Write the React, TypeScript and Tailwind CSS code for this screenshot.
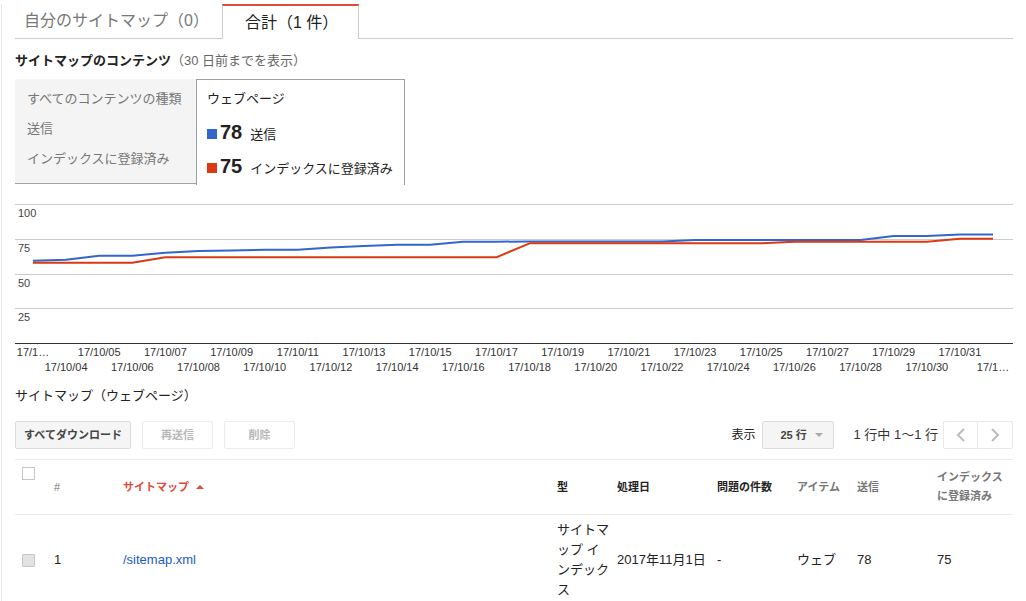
import React from 'react'

const blueY = [
  260.7, 259.7, 255.7, 255.7, 252.7, 251, 250.5, 249.7, 249.7, 247.5, 246, 244.7, 244.7, 241.7, 241.7,
  241.5, 241.5, 241.5, 241.5, 241.5, 240, 240, 240, 240, 240, 240, 236, 236, 234.5, 234.5,
]

const redY = [
  262.7, 262.7, 262.7, 262.7, 257.3, 257.3, 257.3, 257.3, 257.3, 257.3, 257.3, 257.3, 257.3, 257.3, 257.3,
  243.3, 243.3, 243.3, 243.3, 243.3, 243.3, 243.3, 243.3, 241.7, 241.7, 241.7, 241.7, 241.7, 238.7, 238.7,
]

const xAt = (i: number) => 33 + (i * 960) / 29

const toPoints = (ys: number[]) => ys.map((y, i) => `${xAt(i).toFixed(1)},${y}`).join(' ')

const dateLabel = (i: number) => {
  if (i === 0 || i === 29) return '17/1…'
  const d = 3 + i
  return `17/10/${d < 10 ? '0' + d : d}`
}

function Chart() {
  const grid = [204.5, 239.5, 274.5, 308.5]
  const yLabels = ['100', '75', '50', '25']
  return (
    <svg width={998} height={191} viewBox="15 185 998 191" className="block">
      {grid.map((y) => (
        <line key={y} x1={15} x2={1013} y1={y} y2={y} stroke="#cccccc" strokeWidth={1} />
      ))}
      <line x1={15} x2={1013} y1={343.5} y2={343.5} stroke="#333333" strokeWidth={1} />
      {yLabels.map((t, k) => (
        <text key={t} x={18} y={grid[k] + 12} fontSize={11} fill="#444444" fontFamily="Liberation Sans, Arial, sans-serif">
          {t}
        </text>
      ))}
      <polyline points={toPoints(blueY)} fill="none" stroke="#3366cc" strokeWidth={2} strokeLinejoin="round" />
      <polyline points={toPoints(redY)} fill="none" stroke="#dc3912" strokeWidth={2} strokeLinejoin="round" />
      {Array.from({ length: 30 }).map((_, i) => (
        <text
          key={i}
          x={xAt(i)}
          y={i % 2 === 0 ? 356 : 371}
          fontSize={11}
          fill="#333333"
          textAnchor="middle"
          fontFamily="Liberation Sans, Arial, sans-serif"
        >
          {dateLabel(i)}
        </text>
      ))}
    </svg>
  )
}

function Chevron({ dir }: { dir: 'left' | 'right' }) {
  return (
    <svg width="10" height="14" viewBox="0 0 10 14">
      <polyline
        points={dir === 'left' ? '8,1 2,7 8,13' : '2,1 8,7 2,13'}
        fill="none"
        stroke="#bdbdbd"
        strokeWidth={2}
      />
    </svg>
  )
}

export default function App() {
  return (
    <div className="ml-[1px] min-h-[601px] w-[1025px] border-l border-[#e6e6e6] bg-white pl-[13px] font-['Liberation_Sans','Noto_Sans_CJK_JP',sans-serif] text-[#222]">
      {/* Tabs */}
      <div className="mt-[4px] flex h-[35px] w-[998px] border-b border-[#cccccc]">
        <div className="flex w-[207px] items-center pl-[9px] text-[16px] leading-[20px] text-[#777]">
          自分のサイトマップ（0）
        </div>
        <div className="-mb-px flex h-[35px] w-[137px] items-center border-x border-t-2 border-x-[#cccccc] border-t-[#dd4b39] bg-white pl-[22px] text-[16px] leading-[20px] text-[#222]">
          合計（1 件）
        </div>
      </div>

      {/* Contents header */}
      <div className="mt-[12px] text-[13px] leading-[20px]">
        <span className="font-bold">サイトマップのコンテンツ</span>
        <span className="text-[#666]">（30 日前までを表示）</span>
      </div>

      {/* Content type selector */}
      <div className="mt-[8px] flex items-start">
        <div className="flex h-[105px] w-[181px] flex-col border-b border-[#a0a0a0] bg-[#f4f4f4] pl-[12px] text-[13px] leading-[20px] text-[#777]">
          <div className="mt-[10px]">すべてのコンテンツの種類</div>
          <div className="mt-[10px]">送信</div>
          <div className="mt-[10px]">インデックスに登録済み</div>
        </div>
        <div className="flex h-[106px] w-[209px] flex-col border-x border-t border-[#a0a0a0] bg-white pl-[10px]">
          <div className="mt-[9px] text-[13px] leading-[20px]">ウェブページ</div>
          <div className="mt-[10px] flex h-[26px] items-baseline">
            <span className="inline-block h-[10px] w-[10px] bg-[#3366cc]" />
            <span className="ml-[3px] text-[20px] font-bold leading-[26px]">78</span>
            <span className="ml-[8px] text-[13px] leading-[26px]">送信</span>
          </div>
          <div className="mt-[8px] flex h-[26px] items-baseline">
            <span className="inline-block h-[10px] w-[10px] bg-[#dc3912]" />
            <span className="ml-[3px] text-[20px] font-bold leading-[26px]">75</span>
            <span className="ml-[8px] text-[13px] leading-[26px]">インデックスに登録済み</span>
          </div>
        </div>
      </div>

      <Chart />

      {/* Sitemap list */}
      <div className="mt-[10px] text-[13px] leading-[20px]">サイトマップ（ウェブページ）</div>

      <div className="mt-[15px] flex h-[28px] w-[998px] items-center">
        <button className="h-[28px] w-[116px] rounded-[2px] border border-[#dcdcdc] bg-[#f5f5f5] text-[11px] font-bold text-[#444]">
          すべてダウンロード
        </button>
        <button className="ml-[11px] h-[28px] w-[71px] rounded-[2px] border border-[#ececec] bg-white text-[11px] font-bold text-[#b8b8b8]">
          再送信
        </button>
        <button className="ml-[11px] h-[28px] w-[71px] rounded-[2px] border border-[#ececec] bg-white text-[11px] font-bold text-[#b8b8b8]">
          削除
        </button>

        <div className="ml-auto flex items-center">
          <span className="text-[12px] leading-[20px]">表示</span>
          <div className="ml-[7px] flex h-[28px] w-[72px] items-center rounded-[2px] border border-[#dcdcdc] bg-[#f5f5f5] pl-[17px] text-[11px] font-bold text-[#444]">
            25 行
            <span className="ml-[8px] inline-block h-0 w-0 border-x-[4px] border-t-[4px] border-x-transparent border-t-[#aaaaaa]" />
          </div>
          <span className="ml-[19px] text-[13px] leading-[20px] text-[#333]">1 行中 1～1 行</span>
          <div className="ml-[5px] flex">
            <div className="flex h-[28px] w-[35px] items-center justify-center rounded-l-[2px] border border-[#e8e8e8] bg-white">
              <Chevron dir="left" />
            </div>
            <div className="-ml-px flex h-[28px] w-[36px] items-center justify-center rounded-r-[2px] border border-[#e8e8e8] bg-white">
              <Chevron dir="right" />
            </div>
          </div>
        </div>
      </div>

      {/* Table header */}
      <div className="mt-[10px] grid h-[56px] w-[998px] grid-cols-[39px_69px_434px_60px_100px_80px_60px_80px_76px] items-center border-y border-[#ebebeb] text-[11px] font-bold leading-[19px]">
        <div className="self-start pl-[7px] pt-[7px]">
          <div className="h-[13px] w-[13px] border border-[#c6c6c6] bg-white" />
        </div>
        <div className="font-normal text-[#777]">#</div>
        <div className="flex items-center text-[#dd4b39]">
          サイトマップ
          <span className="ml-[7px] inline-block h-0 w-0 border-x-[4px] border-b-[4px] border-x-transparent border-b-[#dd4b39]" />
        </div>
        <div>型</div>
        <div>処理日</div>
        <div>問題の件数</div>
        <div className="text-[#777]">アイテム</div>
        <div className="text-[#777]">送信</div>
        <div className="text-[#777]">
          インデックス
          <br />
          に登録済み
        </div>
      </div>

      {/* Table row */}
      <div className="grid w-[998px] grid-cols-[39px_69px_434px_60px_100px_80px_60px_80px_76px] items-center py-[5px] text-[13px] leading-[20px]">
        <div className="pl-[7px]">
          <div className="h-[13px] w-[13px] rounded-[1px] border border-[#c6c6c6] bg-[#e2e2e2]" />
        </div>
        <div>1</div>
        <div className="text-[#1a5acb]">/sitemap.xml</div>
        <div className="w-[54px]">サイトマップ インデックス</div>
        <div>2017年11月1日</div>
        <div>-</div>
        <div>ウェブ</div>
        <div>78</div>
        <div>75</div>
      </div>
    </div>
  )
}
